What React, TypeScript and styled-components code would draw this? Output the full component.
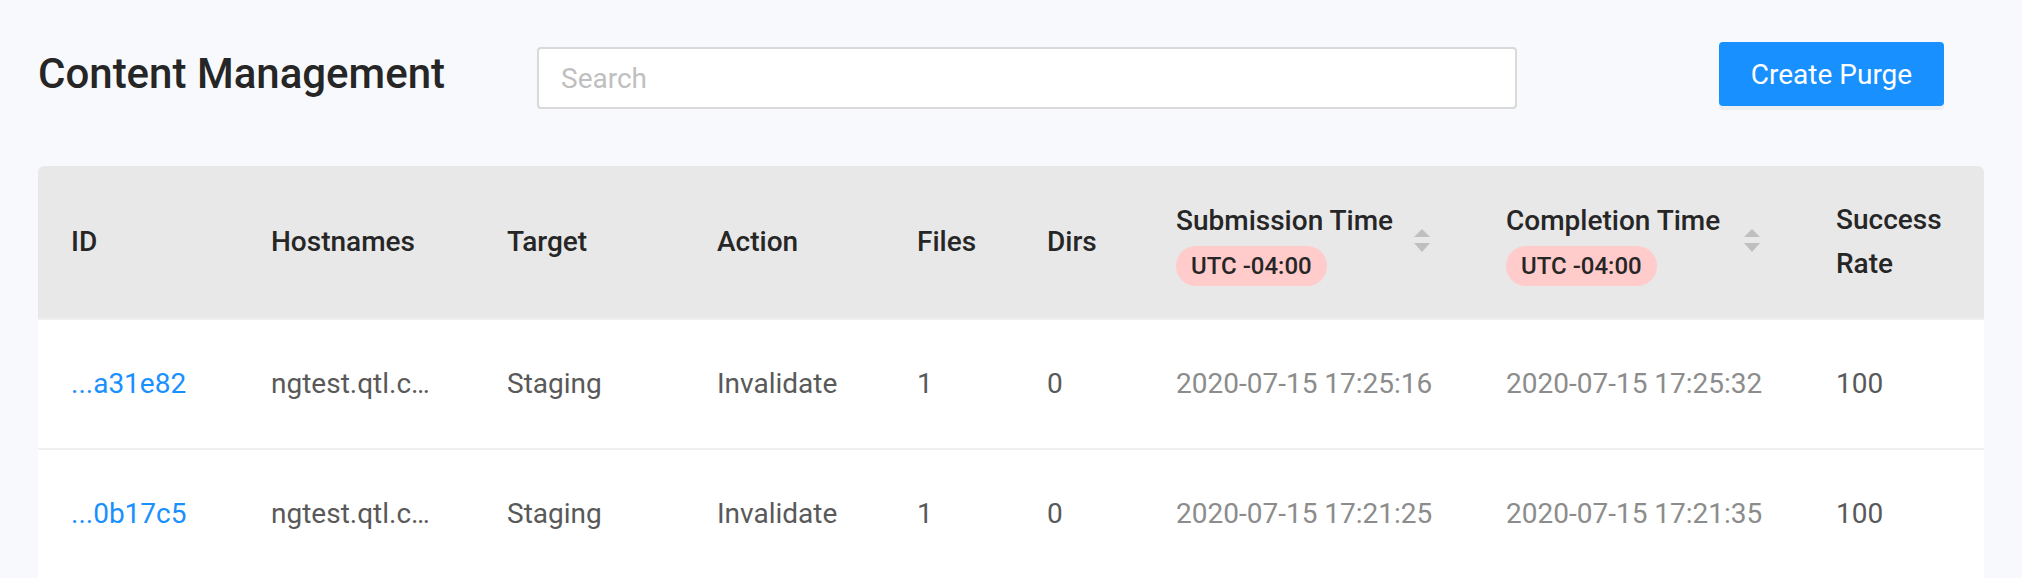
import React from "react";
import styled, { createGlobalStyle } from "styled-components";

const GlobalStyle = createGlobalStyle`
  html, body {
    margin: 0;
    padding: 0;
    background: #f8f9fc;
    font-family: Roboto, "Liberation Sans", Arial, sans-serif;
  }
  * { box-sizing: border-box; }
`;

const Page = styled.div`
  padding: 42px 38px 0 38px;
  min-height: 578px;
  overflow: hidden;
`;

const Header = styled.header`
  display: flex;
  align-items: flex-start;
  height: 64px;
`;

const Title = styled.h1`
  margin: 0;
  width: 499px;
  flex: none;
  font-size: 42px;
  line-height: 64px;
  font-weight: 500;
  color: #262626;
`;

const SearchInput = styled.input`
  flex: none;
  margin-top: 5px;
  width: 980px;
  height: 62px;
  padding: 0 22px;
  border: 2px solid #d9d9d9;
  border-radius: 4px;
  background: #fff;
  font-family: inherit;
  font-size: 28px;
  color: #262626;
  outline: none;
  &::placeholder { color: #bfbfbf; }
`;

const PrimaryButton = styled.button`
  flex: none;
  margin-left: auto;
  margin-right: 40px;
  width: 225px;
  height: 64px;
  border: none;
  border-radius: 4px;
  background: #1890ff;
  color: #fff;
  font-family: inherit;
  font-size: 28px;
  box-shadow: 0 4px 0 rgba(0, 0, 0, 0.045);
  cursor: pointer;
`;

const Table = styled.table`
  margin-top: 60px;
  width: 1946px;
  table-layout: fixed;
  border-collapse: separate;
  border-spacing: 0;
  background: #fff;
  border-radius: 6px 6px 0 0;
`;

const HeadCell = styled.th`
  height: 154px;
  padding: 0 33px;
  background: #e8e8e8;
  border-bottom: 2px solid #f0f0f0;
  text-align: left;
  vertical-align: middle;
  font-size: 28px;
  line-height: 44px;
  font-weight: 500;
  color: #262626;
  &:first-child { border-top-left-radius: 6px; }
  &:last-child { border-top-right-radius: 6px; }
`;

const SortHead = styled.div`
  display: flex;
  align-items: center;
  justify-content: space-between;
  padding-right: 10px;
`;

const HeadStack = styled.div`
  display: flex;
  flex-direction: column;
  align-items: flex-start;
`;

const ZoneBadge = styled.span`
  display: inline-block;
  margin-top: 3px;
  padding: 0 15px;
  border-radius: 20px;
  background: #ffcbcb;
  color: #262626;
  font-size: 24px;
  line-height: 40px;
  font-weight: 500;
`;

const Cell = styled.td<{ $tone?: "link" | "muted" | "normal" }>`
  height: 130px;
  padding: 0 33px;
  border-bottom: 2px solid #f0f0f0;
  vertical-align: middle;
  font-size: 28px;
  line-height: 44px;
  white-space: nowrap;
  overflow: hidden;
  color: ${(p) =>
    p.$tone === "link" ? "#1890ff" : p.$tone === "muted" ? "#8c8c8c" : "#595959"};
`;

const Sorter = () => (
  <svg width="16" height="26" viewBox="0 0 16 26" aria-hidden>
    <polygon points="8,0 16,8 0,8" fill="#bfbfbf" />
    <polygon points="0,14 16,14 8,23" fill="#bfbfbf" />
  </svg>
);

const widths = [200, 236, 210, 200, 130, 129, 330, 330, 181];

const rows = [
  {
    id: "...a31e82",
    host: "ngtest.qtl.c\u2026",
    target: "Staging",
    action: "Invalidate",
    files: "1",
    dirs: "0",
    sub: "2020-07-15 17:25:16",
    comp: "2020-07-15 17:25:32",
    rate: "100",
  },
  {
    id: "...0b17c5",
    host: "ngtest.qtl.c\u2026",
    target: "Staging",
    action: "Invalidate",
    files: "1",
    dirs: "0",
    sub: "2020-07-15 17:21:25",
    comp: "2020-07-15 17:21:35",
    rate: "100",
  },
];

const TimeHead = ({ label }: { label: string }) => (
  <SortHead>
    <HeadStack>
      <span>{label}</span>
      <ZoneBadge>UTC -04:00</ZoneBadge>
    </HeadStack>
    <Sorter />
  </SortHead>
);

export default function App() {
  return (
    <>
      <GlobalStyle />
      <Page>
        <Header>
          <Title>Content Management</Title>
          <SearchInput placeholder="Search" />
          <PrimaryButton>Create Purge</PrimaryButton>
        </Header>
        <Table>
          <colgroup>
            {widths.map((w, i) => (
              <col key={i} style={{ width: w }} />
            ))}
          </colgroup>
          <thead>
            <tr>
              <HeadCell>ID</HeadCell>
              <HeadCell>Hostnames</HeadCell>
              <HeadCell>Target</HeadCell>
              <HeadCell>Action</HeadCell>
              <HeadCell>Files</HeadCell>
              <HeadCell>Dirs</HeadCell>
              <HeadCell>
                <TimeHead label="Submission Time" />
              </HeadCell>
              <HeadCell>
                <TimeHead label="Completion Time" />
              </HeadCell>
              <HeadCell>Success Rate</HeadCell>
            </tr>
          </thead>
          <tbody>
            {rows.map((r) => (
              <tr key={r.id}>
                <Cell $tone="link">{r.id}</Cell>
                <Cell>{r.host}</Cell>
                <Cell>{r.target}</Cell>
                <Cell>{r.action}</Cell>
                <Cell>{r.files}</Cell>
                <Cell>{r.dirs}</Cell>
                <Cell $tone="muted">{r.sub}</Cell>
                <Cell $tone="muted">{r.comp}</Cell>
                <Cell>{r.rate}</Cell>
              </tr>
            ))}
          </tbody>
        </Table>
      </Page>
    </>
  );
}
